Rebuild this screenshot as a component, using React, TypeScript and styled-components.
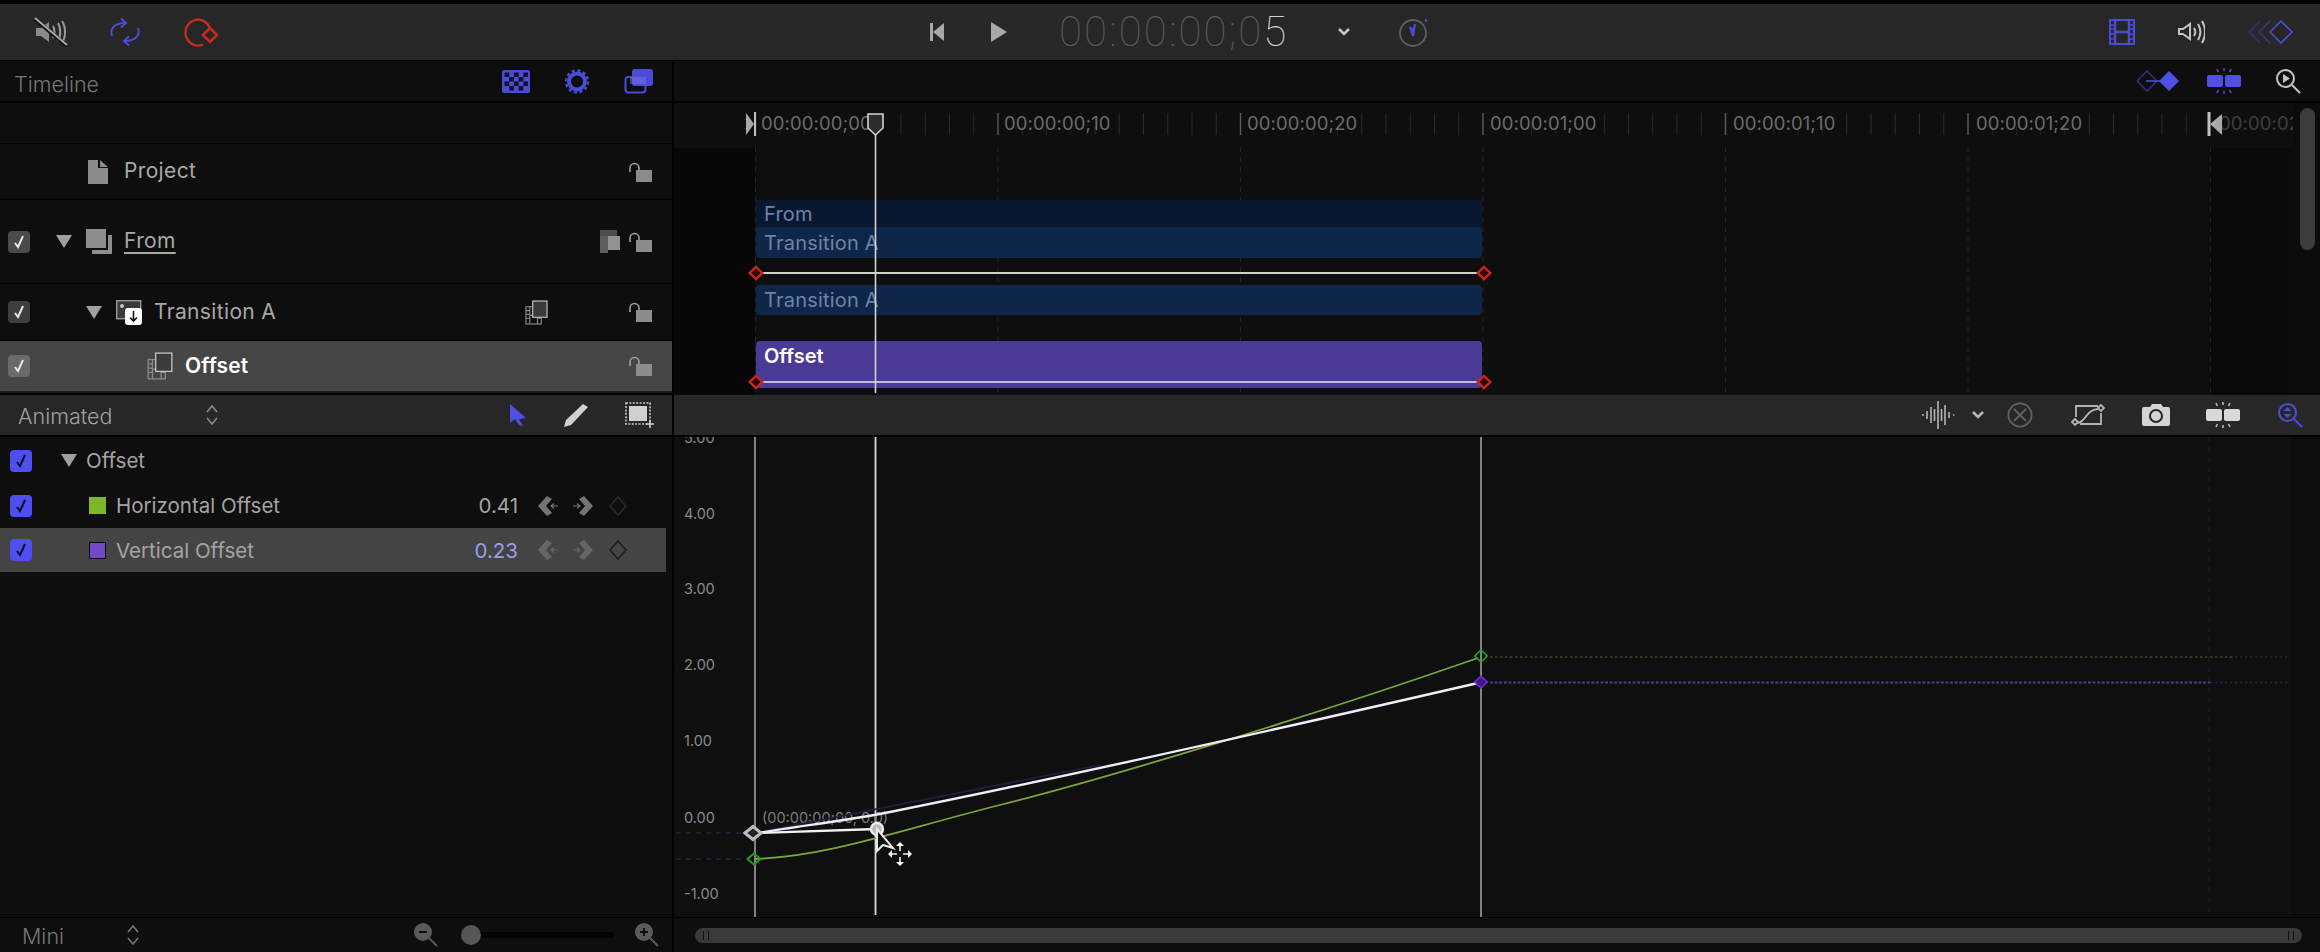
import React from 'react';
import styled, { createGlobalStyle } from 'styled-components';

const ACCENT = '#4b4bd6';
const SANS = `Inter, "Liberation Sans", sans-serif`;

const GlobalStyle = createGlobalStyle`
  html, body { margin: 0; padding: 0; background: #000; overflow: hidden; }
  * { box-sizing: border-box; }
`;

const Page = styled.div`
  width: 2320px;
  height: 952px;
  padding-top: 4px;
  background: #000;
  font-family: ${SANS};
  display: flex;
  flex-direction: column;
`;

const Toolbar = styled.div`
  height: 56px;
  margin-bottom: 1px;
  flex-shrink: 0;
  background: #272727;
  display: grid;
  grid-template-columns: 928px 1fr auto;
  align-items: center;
`;

const ToolGroup = styled.div<{ $gap: number; $pad?: string }>`
  display: flex;
  align-items: center;
  gap: ${p => p.$gap}px;
  padding: ${p => p.$pad ?? '0'};
`;

const Timecode = styled.div`
  font-family: Roboto, sans-serif;
  font-weight: 100;
  font-size: 42px;
  line-height: 56px;
  letter-spacing: 2.1px;
  color: #5a5a5a;
  margin: 0 49px 0 51px;
  & > span { color: #d0d0d0; }
`;

const Split = styled.div<{ $height: number; $gapBelow?: number }>`
  height: ${p => p.$height}px;
  margin-bottom: ${p => p.$gapBelow ?? 0}px;
  flex-shrink: 0;
  display: grid;
  grid-template-columns: 672px 1fr;
  column-gap: 2px;
`;

const Column = styled.div`
  display: flex;
  flex-direction: column;
  min-width: 0;
  overflow: hidden;
`;

const PanelHeader = styled.div<{ $justify?: string }>`
  height: 40px;
  margin-bottom: 2px;
  flex-shrink: 0;
  background: #0e0e0e;
  display: flex;
  align-items: center;
  justify-content: ${p => p.$justify ?? 'space-between'};
`;

const PanelTitle = styled.div`
  font-size: 21.5px;
  font-weight: 300;
  color: #767676;
  padding: 6px 0 0 14px;
`;

const RulerSpacer = styled.div`
  height: 40px;
  margin-bottom: 1px;
  flex-shrink: 0;
  background: #0e0e0e;
`;

const LayerRow = styled.div<{ $height: number; $selected?: boolean; $ruled?: boolean }>`
  height: ${p => p.$height}px;
  flex-shrink: 0;
  display: flex;
  align-items: center;
  padding: 0 20px 0 8px;
  background: ${p => (p.$selected ? '#454545' : '#0e0e0e')};
  border-bottom: ${p => (p.$ruled ? '1px solid #050505' : '0')};
`;

const LayerCheck = styled.div<{ $tone: string }>`
  width: 22px;
  height: 22px;
  flex-shrink: 0;
  border-radius: 4px;
  background: ${p => p.$tone};
  display: flex;
  align-items: center;
  justify-content: center;
`;

const CheckSpace = styled.div`
  width: 22px;
  flex-shrink: 0;
`;

const Indent = styled.div<{ $width: number }>`
  width: ${p => p.$width}px;
  flex-shrink: 0;
`;

const Disclosure = styled.div<{ $size: number }>`
  width: 0;
  height: 0;
  flex-shrink: 0;
  border-left: ${p => p.$size}px solid transparent;
  border-right: ${p => p.$size}px solid transparent;
  border-top: ${p => Math.round(p.$size * 1.6)}px solid #a0a0a0;
`;

const LayerName = styled.div<{ $bold?: boolean; $link?: boolean; $offset?: number }>`
  font-size: 21px;
  letter-spacing: ${p => (p.$bold ? 0.1 : 0.35)}px;
  font-weight: ${p => (p.$bold ? 600 : 400)};
  color: ${p => (p.$bold ? '#fff' : '#a8a8a8')};
  text-decoration: ${p => (p.$link ? 'underline' : 'none')};
  text-underline-offset: 4px;
  text-decoration-thickness: 1.5px;
  margin-left: ${p => p.$offset ?? 12}px;
  padding-bottom: 2px;
  white-space: nowrap;
`;

const Push = styled.div`
  flex: 1;
`;

const RowRule = styled.div`
  height: 1px;
  flex-shrink: 0;
  background: #000;
`;

const LayerGap = styled.div`
  height: 4px;
  flex-shrink: 0;
  background: #1a1a1a;
  border-bottom: 2px solid #000;
`;

const TrackCanvas = styled.div`
  position: relative;
  flex: 1;
  background: #0e0e0e;
  overflow: hidden;
`;

const CanvasArt = styled.svg`
  position: absolute;
  left: 0;
  top: 0;
`;

const Clip = styled.div<{ $top: number; $height: number; $tone: string; $square?: boolean; $labelTop?: number }>`
  position: absolute;
  left: 82px;
  width: 726px;
  top: ${p => p.$top}px;
  height: ${p => p.$height}px;
  background: ${p => p.$tone};
  border-radius: ${p => (p.$square ? '0' : '4px')};
  padding: ${p => p.$labelTop ?? 3}px 0 0 8px;
`;

const ClipLabel = styled.div<{ $bold?: boolean }>`
  font-size: 20px;
  line-height: 24px;
  letter-spacing: ${p => (p.$bold ? 0 : 0.2)}px;
  font-weight: ${p => (p.$bold ? 600 : 400)};
  color: ${p => (p.$bold ? '#fff' : '#6d83ab')};
  white-space: nowrap;
`;

const RulerLabel = styled.span<{ $dim?: boolean }>`
  position: absolute;
  top: 10px;
  font-size: 18.5px;
  line-height: 20px;
  letter-spacing: 0.1px;
  color: ${p => (p.$dim ? '#3e3e3e' : '#6b6b6b')};
  white-space: nowrap;
`;

const ScrollRail = styled.div`
  position: absolute;
  left: 1619px;
  top: 0;
  bottom: 0;
  right: 0;
  background: #0b0b0b;
`;

const ScrollThumb = styled.div`
  position: absolute;
  left: 1626px;
  top: 5px;
  width: 15px;
  height: 142px;
  border-radius: 8px;
  background: #3c3c3c;
`;

const Bar = styled.div<{ $justify?: string }>`
  height: 40px;
  background: #272727;
  display: flex;
  align-items: center;
  justify-content: ${p => p.$justify ?? 'space-between'};
`;

const PopupLabel = styled.div<{ $width: number; $dim?: boolean }>`
  width: ${p => p.$width}px;
  font-size: 21.5px;
  font-weight: 300;
  padding-top: 2px;
  color: ${p => (p.$dim ? '#777' : '#a0a0a0')};
`;

const PopupField = styled.div<{ $pad: number }>`
  display: flex;
  align-items: center;
  padding-left: ${p => p.$pad}px;
`;

const ParamList = styled.div`
  flex: 1;
  background: #0e0e0e;
  padding-top: 1px;
`;

const ParamRow = styled.div<{ $selected?: boolean }>`
  height: ${p => (p.$selected ? 44 : 45)}px;
  width: 666px;
  display: flex;
  align-items: center;
  padding-left: 10px;
  background: ${p => (p.$selected ? '#444' : 'transparent')};
`;

const ParamLabel = styled.div<{ $offset?: number }>`
  font-size: 20.5px;
  color: #a4a4a4;
  margin-left: ${p => p.$offset ?? 10}px;
  white-space: nowrap;
`;

const Swatch = styled.div<{ $tone: string; $outlined?: boolean }>`
  width: 17px;
  height: 17px;
  flex-shrink: 0;
  background: ${p => p.$tone};
  border: ${p => (p.$outlined ? '1.5px solid #0a0a0a' : '0')};
`;

const ParamValue = styled.div<{ $active?: boolean }>`
  width: 70px;
  margin-right: 20px;
  text-align: right;
  font-size: 20.5px;
  color: ${p => (p.$active ? '#9c9ce4' : '#a4a4a4')};
`;

const KeyNav = styled.div`
  display: flex;
  align-items: center;
  gap: 15px;
`;

const GraphPanel = styled.div`
  background: #0f0f0f;
  overflow: hidden;
`;

const FooterLeft = styled.div`
  background: #0e0e0e;
  display: flex;
  align-items: center;
`;

const SliderTrack = styled.div`
  position: relative;
  width: 143px;
  height: 6px;
  margin: 0 20px 0 32px;
  border-radius: 3px;
  background: #030303;
`;

const SliderKnob = styled.div`
  position: absolute;
  left: -10px;
  top: -7px;
  width: 20px;
  height: 20px;
  border-radius: 50%;
  background: #565656;
`;

const FooterRight = styled.div`
  background: #0e0e0e;
  display: flex;
  align-items: center;
  padding-left: 21px;
`;

const HScroll = styled.div`
  width: 1607px;
  height: 15px;
  border-radius: 8px;
  background: #3a3a3a;
  display: flex;
  align-items: center;
  justify-content: space-between;
  padding: 0 8px;
`;

const Grip = styled.div`
  width: 6px;
  height: 9px;
  border-left: 1.5px solid #111;
  border-right: 1.5px solid #111;
`;

const HeaderIcons = styled.div<{ $gap: number; $pad: number }>`
  display: flex;
  align-items: center;
  gap: ${p => p.$gap}px;
  padding-right: ${p => p.$pad}px;
`;

/* ---------- icons ---------- */

const Mute = () => (
  <svg width="36" height="30" viewBox="0 0 36 30" fill="none" stroke="#9c9c9c" strokeWidth="2">
    <path d="M3 11h5l8-6v20l-8-6H3z" fill="#8a8a8a" stroke="none" />
    <path d="M20 9c2 3 2 9 0 12M25 6c3 5 3 13 0 18M29 4c4 6 4 16 0 22" />
    <path d="M2 2l32 27" stroke="#0e0e0e" strokeWidth="4" />
    <path d="M2 1l32 27" stroke="#aaa" strokeWidth="2" />
  </svg>
);

const Loop = () => (
  <svg width="34" height="30" viewBox="0 0 34 30" fill="none" stroke={ACCENT} strokeWidth="2">
    <path d="M4 19C1 11 8 6 17 6" />
    <path d="M13 1.5l5 4.5-5 4.5" />
    <path d="M30 11c3 8-4 13-13 13" />
    <path d="M21 28.5l-5-4.5 5-4.5" />
  </svg>
);

const LoopKey = () => (
  <svg width="39" height="30" viewBox="-3 0 39 30" fill="none" stroke="#c62a20" strokeWidth="2.4">
    <path d="M26 12A12.5 13 0 1 0 19 27.5" />
    <path d="M26 11l7 7-7 7-7-7z" strokeWidth="2.6" />
  </svg>
);

const JumpStart = () => (
  <svg width="18" height="20" viewBox="0 0 18 20" fill="#a8a8a8">
    <rect x="2" y="1" width="3" height="18" />
    <path d="M16 1v18L5 10z" />
  </svg>
);

const Play = () => (
  <svg width="18" height="22" viewBox="0 0 18 22" fill="#a8a8a8">
    <path d="M1 1l16 10L1 21z" />
  </svg>
);

const Chevron = ({ tone = '#c8c8c8' }: { tone?: string }) => (
  <svg width="14" height="10" viewBox="0 0 14 10" fill="none" stroke={tone} strokeWidth="2.6">
    <path d="M2 2l5 5 5-5" />
  </svg>
);

const Clock = () => (
  <svg width="32" height="32" viewBox="0 0 32 32" fill="none">
    <circle cx="15" cy="17" r="13" stroke="#5e5e5e" strokeWidth="1.8" />
    <path d="M15 20l2-12 -2 7 -3-4z" stroke={ACCENT} strokeWidth="2" />
    <path d="M27 2l3 3-3 1z" fill={ACCENT} />
  </svg>
);

const FilmStrip = () => (
  <svg width="26" height="26" viewBox="0 0 26 26" fill="none" stroke={ACCENT} strokeWidth="2">
    <rect x="1" y="1" width="24" height="24" />
    <path d="M6 1v24M20 1v24M6 13h14" strokeWidth="2.4" />
    <path d="M1 6h5M1 10h5M1 15h5M1 20h5M20 6h5M20 10h5M20 15h5M20 20h5" strokeWidth="1.4" />
  </svg>
);

const Speaker = () => (
  <svg width="28" height="26" viewBox="0 0 28 26" fill="none" stroke="#c4c4c4" strokeWidth="2">
    <path d="M2 10h4l7-5v15l-7-5H2z" />
    <path d="M17 9c1.6 2.5 1.6 5.5 0 8M21 5c3 5 3 11 0 16M25 2c4 7 4 15 0 22" />
  </svg>
);

const DiamondRun = () => (
  <svg width="48" height="26" viewBox="0 0 48 26" fill="none" strokeWidth="1.6">
    <path d="M13 2L2 13l11 11" stroke="#2f2f70" />
    <path d="M23 2L12 13l11 11" stroke="#38388a" />
    <path d="M34 2l11 11-11 11-11-11z" stroke={ACCENT} />
  </svg>
);

const Checker = () => (
  <svg width="28" height="23" viewBox="0 0 28 23">
    <rect width="28" height="23" rx="2" fill={ACCENT} />
    {[0, 1, 2, 3].map(r =>
      [0, 1, 2, 3, 4].map(c =>
        (r + c) % 2 === 0 ? <rect key={`${r}-${c}`} x={2.5 + c * 4.7} y={2.5 + r * 4.5} width="4.7" height="4.5" fill="#12122c" /> : null
      )
    )}
  </svg>
);

const Gear = () => (
  <svg width="26" height="25" viewBox="0 0 26 25" fill="none" stroke={ACCENT}>
    <circle cx="13" cy="12.5" r="8" strokeWidth="4" />
    <circle cx="13" cy="12.5" r="11" strokeWidth="2.4" strokeDasharray="3 2.76" />
  </svg>
);

const Layers = () => (
  <svg width="30" height="26" viewBox="0 0 30 26" fill="none">
    <rect x="8" y="1" width="21" height="17" rx="3" fill={ACCENT} />
    <rect x="1.5" y="9" width="20" height="15.5" rx="3" stroke={ACCENT} strokeWidth="2" />
    <rect x="6" y="9" width="16" height="7" fill="#7878e8" opacity="0.5" />
  </svg>
);

const KeyPair = () => (
  <svg width="44" height="28" viewBox="0 0 44 28" fill="none">
    <path d="M11 4l10 10-10 10L1 14z" stroke="#34347e" strokeWidth="1.4" />
    <path d="M10 14h16" stroke={ACCENT} strokeWidth="1.6" />
    <path d="M33 4l10 10-10 10-10-10z" fill="#5050e8" />
  </svg>
);

const SplitMark = ({ tone, ray }: { tone: string; ray: string }) => (
  <svg width="36" height="28" viewBox="0 0 36 28" fill="none">
    <rect x="1" y="8" width="16" height="12" rx="2" fill={tone} />
    <rect x="19" y="8" width="16" height="12" rx="2" fill={tone} />
    <path d="M18 1v3M18 24v3M11 2l1.4 3M25 2l-1.4 3M11 26l1.4-3M25 26l-1.4-3" stroke={ray} strokeWidth="1.6" />
  </svg>
);

const ZoomPlay = () => (
  <svg width="33" height="26" viewBox="-7 0 33 26" fill="none" stroke="#c4c4c4" strokeWidth="2">
    <circle cx="10.5" cy="10.5" r="8.5" />
    <path d="M17 17l8 8" />
    <path d="M8 6l7 4.5-7 4.5z" fill="#c4c4c4" stroke="none" />
  </svg>
);

const ZoomFit = () => (
  <svg width="26" height="26" viewBox="0 0 26 26" fill="none" stroke={ACCENT} strokeWidth="2.2">
    <circle cx="10.5" cy="10.5" r="8.5" />
    <path d="M17 17l8 8" />
    <path d="M6.5 9l4-4 4 4zM6.5 12l4 4 4-4z" fill={ACCENT} stroke="none" />
  </svg>
);

const Waveform = () => (
  <svg width="34" height="30" viewBox="0 0 34 30" fill="none" stroke="#b4b4b4" strokeWidth="1.6">
    <path d="M1 15h2M6 11v8M10 7v16M13.5 9v12M17 1v28M20.5 9v12M24 5v20M28 12v6M32 15h1.5" />
  </svg>
);

const ClearCircle = () => (
  <svg width="26" height="26" viewBox="0 0 26 26" fill="none" stroke="#626262" strokeWidth="1.8">
    <circle cx="13" cy="13" r="11.6" />
    <path d="M7 7l12 12M19 7L7 19" />
  </svg>
);

const CurveBox = () => (
  <svg width="34" height="24" viewBox="0 0 34 24" fill="none" stroke="#b4b4b4" strokeWidth="1.8">
    <path d="M5 14V3h22M30 10v11H9" />
    <path d="M6 20c9 0 8-13 21-14" />
    <path d="M4 16l-3 3 3 3 3-3zM30 2l-3 3 3 3 3-3z" fill="#272727" />
  </svg>
);

const Camera = () => (
  <svg width="30" height="24" viewBox="0 0 30 24">
    <path d="M3 4h6l2-3h9l2 3h5a2 2 0 0 1 2 2v15a2 2 0 0 1-2 2H3a2 2 0 0 1-2-2V6a2 2 0 0 1 2-2z" fill="#d4d4d4" />
    <circle cx="15" cy="13" r="6" fill="#d4d4d4" stroke="#272727" strokeWidth="2" />
  </svg>
);

const UpDown = ({ tone }: { tone: string }) => (
  <svg width="14" height="22" viewBox="0 0 14 22" fill="none" stroke={tone} strokeWidth="1.6">
    <path d="M2 8l5-6 5 6M2 14l5 6 5-6" />
  </svg>
);

const Pointer = () => (
  <svg width="18" height="24" viewBox="0 0 18 24">
    <path d="M1 1l16 14-7 1 4 7-4-1-4-6-5 4z" fill="#4f4fe6" />
  </svg>
);

const Pen = () => (
  <svg width="28" height="26" viewBox="0 0 28 26">
    <path d="M21 2l5 3-17 18-7 2 2-7z" fill="#d0d0d0" />
  </svg>
);

const Marquee = () => (
  <svg width="30" height="26" viewBox="0 0 30 26" fill="none">
    <rect x="1" y="1" width="24" height="21" stroke="#c8c8c8" strokeWidth="1.6" strokeDasharray="2 1.4" />
    <rect x="4" y="4" width="18" height="15" fill="#d0d0d0" />
    <path d="M25 18v8M21 22h8" stroke="#d0d0d0" strokeWidth="1.6" />
  </svg>
);

const Document = () => (
  <svg width="20" height="24" viewBox="0 0 20 24">
    <path d="M0 0h10v8h10v16H0zM12 0l8 7h-8z" fill="#8c8c8c" />
  </svg>
);

const Lock = () => (
  <svg width="24" height="20" viewBox="0 0 24 20" fill="none">
    <path d="M2 10V6a4.5 4.5 0 0 1 9 0v3" stroke="#a0a0a0" strokeWidth="1.6" />
    <rect x="8" y="8" width="16" height="12" fill="#8c8c8c" />
  </svg>
);

const GroupStack = () => (
  <svg width="26" height="25" viewBox="0 0 26 25">
    <rect x="0" y="0" width="20" height="19" fill="#8e8e8e" />
    <path d="M22 6h4v19H6v-4h16z" fill="#8e8e8e" />
  </svg>
);

const GroupMark = () => (
  <svg width="20" height="23" viewBox="0 0 20 23">
    <rect x="0" y="0" width="17" height="6" fill="#4e4e4e" />
    <rect x="0" y="6" width="8" height="17" fill="#5e5e5e" />
    <rect x="8" y="6" width="12" height="14" fill="#929292" />
  </svg>
);

const MediaStack = ({ size }: { size: number }) => (
  <svg width={size} height={size + 2} viewBox="0 0 24 26" fill="none" stroke="#8a8a8a" strokeWidth="1.2">
    <rect x="1" y="7" width="16" height="18" />
    <path d="M5 7v18M13 7v18M1 11h4M1 15h4M1 19h4M13 19h4M5 16h8" />
    <rect x="8" y="1" width="15" height="17" fill="#3b3b3b" stroke="#c4c4c4" />
  </svg>
);

const ImageImport = () => (
  <svg width="26" height="25" viewBox="0 0 26 25">
    <rect x="0.7" y="0.7" width="24" height="18" fill="#3a3a3a" stroke="#9a9a9a" strokeWidth="1.4" />
    <circle cx="6" cy="6" r="2" fill="#c4c4c4" />
    <rect x="9" y="8" width="17" height="17" rx="3" fill="#fff" />
    <path d="M17.5 11v10M14 17.5l3.5 3.5 3.5-3.5" fill="none" stroke="#111" strokeWidth="1.6" />
  </svg>
);

const Tick = ({ tone }: { tone: string }) => (
  <svg width="12" height="14" viewBox="0 0 12 14" fill="none" stroke={tone} strokeWidth="2">
    <path d="M2 8l3 4 5-11" />
  </svg>
);

const PrevKey = ({ dim }: { dim?: boolean }) => (
  <svg width="20" height="20" viewBox="0 0 20 20">
    <path d="M9 0L0 10l9 10 5-3-6-7 6-7z" fill={dim ? '#666' : '#747474'} />
    <path d="M20 10h-7M16 7.5L13 10l3 2.5" fill="none" stroke={dim ? '#666' : '#747474'} strokeWidth="1.2" />
  </svg>
);

const NextKey = ({ dim }: { dim?: boolean }) => (
  <svg width="20" height="20" viewBox="0 0 20 20">
    <path d="M11 0l9 10-9 10-5-3 6-7-6-7z" fill={dim ? '#666' : '#747474'} />
    <path d="M0 10h7M4 7.5L7 10l-3 2.5" fill="none" stroke={dim ? '#666' : '#747474'} strokeWidth="1.2" />
  </svg>
);

const AddKey = ({ tone }: { tone: string }) => (
  <svg width="20" height="22" viewBox="0 0 20 22" fill="none" stroke={tone} strokeWidth="1.5">
    <path d="M10 2l8 9-8 9-8-9z" />
  </svg>
);

const ZoomSmall = ({ plus }: { plus?: boolean }) => (
  <svg width="26" height="26" viewBox="0 0 26 26" fill="none">
    <circle cx="10" cy="10" r="9" fill="#5a5a5a" />
    <path d="M16 16l8 8" stroke="#5a5a5a" strokeWidth="2" />
    <path d={plus ? 'M6 10h8M10 6v8' : 'M6 10h8'} stroke="#0e0e0e" strokeWidth="2" />
  </svg>
);

/* ---------- ruler and track canvas ---------- */

const FRAME = 24.25;
const ORIGIN = 755.5;
const rulerMarks = ['00:00:00;00', '00:00:00;10', '00:00:00;20', '00:00:01;00', '00:00:01;10', '00:00:01;20', '00:00:02;00'];

const KeyDiamond = ({ x, y, size, tone, fill = 'none', width = 2, ratio = 1.05 }: { x: number; y: number; size: number; tone: string; fill?: string; width?: number; ratio?: number }) => (
  <path d={`M${x} ${y - size}L${x + size * ratio} ${y}L${x} ${y + size}L${x - size * ratio} ${y}z`} fill={fill} stroke={tone} strokeWidth={width} />
);

const TrackOverlay = () => {
  const frames = Array.from({ length: 60 }, (_, i) => i);
  return (
    <CanvasArt width="1646" height="292" viewBox="674 103 1646 292" fill="none">
      <rect x="674" y="148" width="81" height="247" fill="#070707" />
      <rect x="2210" y="148" width="110" height="247" fill="#0a0a0a" />
      {[0, 10, 20, 30, 40, 50, 60].map(f => (
        <path key={f} d={`M${ORIGIN + f * FRAME} 147V395`} stroke="#232323" strokeWidth="1" strokeDasharray="5 5" />
      ))}
      {frames.map(f => {
        const major = f % 10 === 0;
        const bright = f % 10 >= 5;
        const x = ORIGIN + f * FRAME;
        if (major) return <path key={f} d={`M${x} 113V135`} stroke="#5c5c5c" strokeWidth="1.4" />;
        return <path key={f} d={`M${x} ${bright ? 113 : 126}V135`} stroke={bright ? '#2b2b2b' : '#222'} strokeWidth="1" />;
      })}
    </CanvasArt>
  );
};

const TrackMarks = () => (
  <CanvasArt width="1646" height="292" viewBox="674 103 1646 292" fill="none">
    <path d="M755 273H1483" stroke="#cfcfcf" strokeWidth="2" />
    <path d="M757 382H1481" stroke="#c0bbe0" strokeWidth="2" />
    <KeyDiamond x={756} y={273} size={6} tone="#c9281e" fill="#300" width={2.4} />
    <KeyDiamond x={1484} y={273} size={6} tone="#c9281e" fill="#300" width={2.4} />
    <KeyDiamond x={756} y={382} size={6} tone="#c9281e" fill="#300" width={2.4} />
    <KeyDiamond x={1484} y={382} size={6} tone="#c9281e" fill="#300" width={2.4} />
    <path d="M746 113l8 11-8 11z" fill="#a8a8a8" />
    <path d="M755 112V136" stroke="#c0c0c0" strokeWidth="2" />
    <path d="M2209 112V136" stroke="#c0c0c0" strokeWidth="3" />
    <path d="M2222 114l-12 10 12 11z" fill="#a8a8a8" />
    <path d="M875.5 135V393" stroke="#d4d4d4" strokeWidth="1.6" />
    <path d="M868 114h15v14l-7.5 7-7.5-7z" fill="#2c2c2c" stroke="#d4d4d4" strokeWidth="1.6" />
  </CanvasArt>
);

/* ---------- graph ---------- */

const axis = [
  { label: '5.00', y: 443 },
  { label: '4.00', y: 519 },
  { label: '3.00', y: 594 },
  { label: '2.00', y: 670 },
  { label: '1.00', y: 746 },
  { label: '0.00', y: 823 },
  { label: '-1.00', y: 899 },
];

const GraphChart = () => (
  <svg width="1646" height="480" viewBox="674 437 1646 480" fill="none">
    <rect x="2291" y="437" width="29" height="480" fill="#0c0c0c" />
    <path d="M2209 437V917" stroke="#1f1f1f" strokeWidth="1" strokeDasharray="5 5" />
    {axis.map(a => (
      <text key={a.label} x={684} y={a.y} fontFamily={SANS} fontSize="14.5" fill="#8a8a8a">
        {a.label}
      </text>
    ))}
    <path d="M755 437V917M1481 437V917" stroke="#b4b4b4" strokeWidth="1.4" />
    <path d="M875.5 437V915" stroke="#d8d8d8" strokeWidth="1.8" />
    <path d="M676 833H745M676 859H745" stroke="#2a2540" strokeWidth="1.4" strokeDasharray="5 5" />
    <path d="M1490 657H2235" stroke="#3b4a34" strokeWidth="1.6" strokeDasharray="2.4 2.6" />
    <path d="M2235 657H2290" stroke="#242a20" strokeWidth="1.6" strokeDasharray="2.4 2.6" />
    <path d="M1490 682.5H2210" stroke="#4c3c86" strokeWidth="2.2" strokeDasharray="3 1.6" />
    <path d="M2210 682.5H2290" stroke="#2a2448" strokeWidth="1.6" strokeDasharray="2.4 2.6" />
    <text x="762" y="823" fontFamily={SANS} fontSize="14.5" fill="#7c7c7c">
      (00:00:00;00, 0.0)
    </text>
    <path d="M760 832L1100 765" stroke="#241f3e" strokeWidth="1.6" />
    <path d="M755 859C830 856 900 830 1000 805S1300 720 1478 658" stroke="#7da53e" strokeWidth="1.8" />
    <path d="M758 833L877 829" stroke="#f2f2f2" strokeWidth="2.4" />
    <path d="M758 833C800 826 850 820 890 812S1100 770 1478 683" stroke="#f0ecf8" strokeWidth="2.4" />
    <KeyDiamond x={753} y={833} size={6.5} tone="#bcbcbc" fill="#222" width={3} ratio={1.25} />
    <KeyDiamond x={754} y={859} size={5.5} tone="#1f9a1f" width={2} ratio={1.2} />
    <KeyDiamond x={1481} y={656} size={6} tone="#28a428" width={1.6} />
    <KeyDiamond x={1481} y={682} size={6} tone="#7a28e0" fill="#3c1a80" width={1.6} />
    <circle cx="877" cy="829" r="6" fill="#bbb" stroke="#eee" strokeWidth="2.4" />
    <path d="M877 829V851L883 845L893 848z" fill="#0c0c0c" stroke="#e8e8e8" strokeWidth="2" />
    <path d="M900 842l-4 4h8zM900 866l-4-4h8zM888 854l4-4v8zM912 854l-4-4v8z" fill="#f4f4f4" />
    <path d="M900 846v5M900 857v5M892 854h5M903 854h5" stroke="#f4f4f4" strokeWidth="1.6" />
  </svg>
);

const layerCheck = (tone: string) => (
  <LayerCheck $tone={tone}>
    <Tick tone="#e8e8e8" />
  </LayerCheck>
);

const paramCheck = (
  <LayerCheck $tone="#4f4ff0">
    <Tick tone="#0c0c2a" />
  </LayerCheck>
);

export default function App() {
  return (
    <Page>
      <GlobalStyle />
      <Toolbar>
        <ToolGroup $gap={39} $pad="0 0 0 33px">
          <Mute />
          <Loop />
          <LoopKey />
        </ToolGroup>
        <ToolGroup $gap={0}>
          <JumpStart />
          <Indent $width={44} />
          <Play />
          <Timecode>
            00:00:00;0<span>5</span>
          </Timecode>
          <Chevron />
          <Indent $width={47} />
          <Clock />
        </ToolGroup>
        <ToolGroup $gap={42} $pad="0 25px 0 0">
          <FilmStrip />
          <Speaker />
          <DiamondRun />
        </ToolGroup>
      </Toolbar>

      <Split $height={334}>
        <Column>
          <PanelHeader>
            <PanelTitle>Timeline</PanelTitle>
            <HeaderIcons $gap={34} $pad={18}>
              <Checker />
              <Gear />
              <Layers />
            </HeaderIcons>
          </PanelHeader>
          <RulerSpacer />
          <LayerRow $height={56} $ruled>
            <CheckSpace />
            <Indent $width={58} />
            <Document />
            <LayerName $offset={16}>Project</LayerName>
            <Push />
            <Lock />
          </LayerRow>
          <LayerRow $height={84} $ruled>
            {layerCheck('#4a4a4a')}
            <Indent $width={26} />
            <Disclosure $size={8} />
            <Indent $width={14} />
            <GroupStack />
            <LayerName $link>From</LayerName>
            <Push />
            <GroupMark />
            <Indent $width={8} />
            <Lock />
          </LayerRow>
          <LayerRow $height={56}>
            {layerCheck('#3e3e3e')}
            <Indent $width={56} />
            <Disclosure $size={8} />
            <Indent $width={14} />
            <ImageImport />
            <LayerName>Transition A</LayerName>
            <Push />
            <MediaStack size={23} />
            <Indent $width={80} />
            <Lock />
          </LayerRow>
          <RowRule />
          <LayerRow $height={50} $selected>
            {layerCheck('#6a6a6a')}
            <Indent $width={117} />
            <MediaStack size={26} />
            <LayerName $bold>Offset</LayerName>
            <Push />
            <Lock />
          </LayerRow>
          <LayerGap />
        </Column>

        <Column>
          <PanelHeader $justify="flex-end">
            <HeaderIcons $gap={26} $pad={19}>
              <KeyPair />
              <SplitMark tone="#5050e8" ray="#4b4bd6" />
              <ZoomPlay />
            </HeaderIcons>
          </PanelHeader>
          <TrackCanvas>
            <TrackOverlay />
            {rulerMarks.map((mark, i) => (
              <RulerLabel key={mark} $dim={i === 6} style={{ left: 87 + i * 243 }}>
                {mark}
              </RulerLabel>
            ))}
            <Clip $top={97} $height={28} $tone="#0a1730" $square $labelTop={2}>
              <ClipLabel>From</ClipLabel>
            </Clip>
            <Clip $top={124} $height={31} $tone="#0e2647" $labelTop={4}>
              <ClipLabel>Transition A</ClipLabel>
            </Clip>
            <Clip $top={182} $height={30} $tone="#0e2647">
              <ClipLabel>Transition A</ClipLabel>
            </Clip>
            <Clip $top={238} $height={47} $tone="#4a3a96">
              <ClipLabel $bold>Offset</ClipLabel>
            </Clip>
            <TrackMarks />
            <ScrollRail />
            <ScrollThumb />
          </TrackCanvas>
        </Column>
      </Split>

      <Split $height={40} $gapBelow={2}>
        <Bar>
          <PopupField $pad={18}>
            <PopupLabel $width={187}>Animated</PopupLabel>
            <UpDown tone="#8a8a8a" />
          </PopupField>
          <HeaderIcons $gap={35} $pad={17}>
            <Pointer />
            <Pen />
            <Marquee />
          </HeaderIcons>
        </Bar>
        <Bar $justify="flex-end">
          <HeaderIcons $gap={0} $pad={17}>
            <Waveform />
            <Indent $width={16} />
            <Chevron tone="#b8b8b8" />
            <Indent $width={22} />
            <ClearCircle />
            <Indent $width={38} />
            <CurveBox />
            <Indent $width={36} />
            <Camera />
            <Indent $width={34} />
            <SplitMark tone="#d8d8d8" ray="#b8b8b8" />
            <Indent $width={36} />
            <ZoomFit />
          </HeaderIcons>
        </Bar>
      </Split>

      <Split $height={480} $gapBelow={1}>
        <ParamList>
          <ParamRow>
            {paramCheck}
            <Indent $width={29} />
            <Disclosure $size={8} />
            <ParamLabel $offset={9}>Offset</ParamLabel>
          </ParamRow>
          <ParamRow>
            {paramCheck}
            <Indent $width={57} />
            <Swatch $tone="#7fb526" />
            <ParamLabel>Horizontal Offset</ParamLabel>
            <Push />
            <ParamValue>0.41</ParamValue>
            <KeyNav>
              <PrevKey />
              <NextKey />
              <AddKey tone="#2a2a2a" />
            </KeyNav>
            <Indent $width={38} />
          </ParamRow>
          <ParamRow $selected>
            {paramCheck}
            <Indent $width={57} />
            <Swatch $tone="#7048c8" $outlined />
            <ParamLabel>Vertical Offset</ParamLabel>
            <Push />
            <ParamValue $active>0.23</ParamValue>
            <KeyNav>
              <PrevKey dim />
              <NextKey dim />
              <AddKey tone="#1c1c1c" />
            </KeyNav>
            <Indent $width={38} />
          </ParamRow>
        </ParamList>
        <GraphPanel>
          <GraphChart />
        </GraphPanel>
      </Split>

      <Split $height={34}>
        <FooterLeft>
          <PopupField $pad={22}>
            <PopupLabel $width={104} $dim>
              Mini
            </PopupLabel>
            <UpDown tone="#777" />
          </PopupField>
          <Indent $width={273} />
          <ZoomSmall />
          <SliderTrack>
            <SliderKnob />
          </SliderTrack>
          <ZoomSmall plus />
        </FooterLeft>
        <FooterRight>
          <HScroll>
            <Grip />
            <Grip />
          </HScroll>
        </FooterRight>
      </Split>
    </Page>
  );
}
